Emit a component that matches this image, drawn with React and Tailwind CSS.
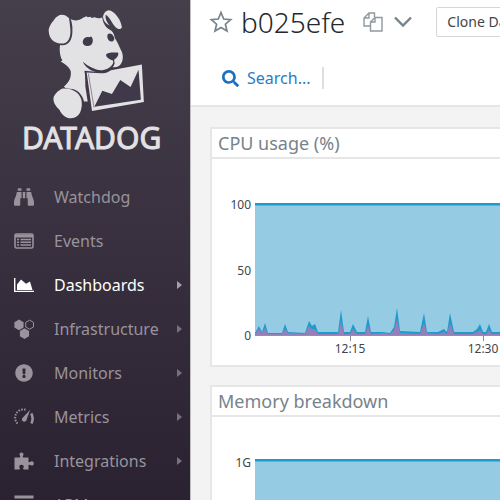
import React from "react";
import { FaBinoculars, FaSearch, FaExclamationCircle } from "react-icons/fa";

function Logo() {
  return (
    <svg viewBox="140 25 300 340" className="ml-[47px] h-[113px] w-[100px]" role="img" aria-label="Datadog mascot">
      <g fill="#e2e1e4">
        <path d="M206 56 C190 40 172 43 160 62 C152 72 143 84 145 98 C147 117 160 131 181 132 C203 133 211 116 210 91 C209 76 207 66 206 56Z" />
        <path d="M211 58 C224 66 236 62 248 54 L258 50 L262 53 L270 51 L274 55 L282 53 C293 56 300 57 306 53 C307 66 313 81 325 88 C340 97 341 103 344 116 C352 128 357 141 362 151 C369 162 370 181 363 191 C360 198 353 202 346 203 L334 203 L330 214 L304 220 L254 218 L255 262 L262 306 L251 306 C246 286 231 268 208 268 C199 268 194 266 190 262 C206 248 213 234 211 216 C209 206 198 196 181 186 L186 182 C179 173 176 150 179 136 C205 141 216 120 216 94 C217 80 214 68 211 58Z" />
        <path d="M308 50 C312 35 323 28 333 34 C349 43 362 62 365 83 C363 90 353 90 346 83 C333 69 330 53 316 45 C314 55 319 68 328 78 C316 73 309 64 308 50Z" />
        <path d="M184 268 C210 264 237 277 243 301 C247 321 242 346 225 354 C205 362 186 352 177 331 C164 320 156 304 160 291 C166 280 175 273 184 268Z" />
      </g>
      <g fill="#40394a">
        <path d="M247 127 C248 116 257 111 266 113 L273 111 C279 118 279 130 272 136 C262 143 247 139 247 127Z" />
        <path d="M322 105 C327 99 336 102 340 111 C345 120 340 126 333 126 C324 125 319 114 322 105Z" />
        <path d="M317 166 C320 159 336 158 352 159 C358 163 351 175 341 181 C332 185 318 175 317 166Z" />
        <path d="M247 187 C264 201 287 214 306 212 C323 210 335 201 339 189 L336 176 L341 178 L343 192 C338 209 323 219 306 220 C281 221 258 209 247 187Z" />
      </g>
      <path d="M252 214 L272 337 L434 309 L423 192 L332 206 L302 218Z" fill="#40394a" />
      <path d="M259 219 L302 221 C316 223 325 217 332 212 L425 195 L431 308 L275 335Z" fill="#e2e1e4" />
      <path d="M282 322 L306 274 L335 284 L360 242 L391 263 L415 211 L422 301Z" fill="#40394a" />
      <path d="M264 222 L281 324" stroke="#68616e" strokeWidth="2" fill="none" />
    </svg>
  );
}

const svgProps = { viewBox: "0 0 20 20", className: "size-5", "aria-hidden": true };

function EventsIcon() {
  return (
    <svg {...svgProps}>
      <rect x="1" y="3" width="18" height="14" rx="1.5" fill="none" stroke="currentColor" strokeWidth="1.6" />
      <path d="M1 3.5h18v3H1z" fill="currentColor" />
      <path d="M3 8.5h2M3 11.3h2M3 14h2M6.5 8.5H17M6.5 11.3H17M6.5 14H17" stroke="currentColor" strokeWidth="1.4" />
    </svg>
  );
}

function AreaIcon() {
  return (
    <svg {...svgProps}>
      <path d="M.7 3v13.4H20" fill="none" stroke="currentColor" strokeWidth="1.4" />
      <path d="M3 15V9.5L7 4.5l5 4.2L16 6.5 18.5 15Z" fill="currentColor" />
    </svg>
  );
}

function HexIcon() {
  return (
    <svg {...svgProps}>
      <path d="M5 .5l4.600 2.700v5.300L5 11.200.4 8.500V3.200Z" fill="currentColor" />
      <path d="M10.500 9.200l4.600 2.700v5.300l-4.600 2.700-4.600-2.700v-5.300Z" fill="currentColor" />
      <path d="M15.600 1.200l3.900 2.200v4.600l-3.900 2.200-3.900-2.200V3.400Z" fill="none" stroke="currentColor" strokeWidth="1" />
    </svg>
  );
}

function GaugeIcon() {
  return (
    <svg {...svgProps}>
      <path d="M3.500 16.500A8.300 8.300 0 0 1 12.500 3" fill="none" stroke="currentColor" strokeWidth="2" strokeDasharray="1.500 1.300" />
      <path d="M16.200 2.800l-3.500 9.400a2.400 2.400 0 1 1-3.800-1.800Z" fill="currentColor" />
      <path d="M17.200 6.500q2.800 4.500.2 10" fill="none" stroke="currentColor" strokeWidth="2.600" />
    </svg>
  );
}

function PuzzleIcon() {
  return (
    <svg {...svgProps}>
      <path
        d="M.5 6.500h5.300c1-.6.2-1.600-.2-2.400C5 2.300 6.300 1.400 7.500 1.400s2.500.9 1.900 2.700c-.4.800-1.200 1.800-.2 2.400h5.300v4c.6 1.200 1.600.4 2.400 0 1.700-.7 2.900.4 2.900 1.900s-1.200 2.600-2.900 1.900c-.8-.4-1.800-1-2.400 0v4.200H9.600c-1-.8-.2-1.500.1-2.400.5-1.400-.8-2.400-2.200-2.400s-2.700 1-2.200 2.400c.3.900 1.100 1.600.1 2.400H.5Z"
        fill="currentColor"
      />
    </svg>
  );
}

function StackIcon() {
  return (
    <svg {...svgProps}>
      <path d="M.5 2h19M.5 9h19M.5 16h19" stroke="currentColor" strokeWidth="3" />
    </svg>
  );
}

const navItems = [
  { label: "Watchdog", icon: <FaBinoculars className="size-5" /> },
  { label: "Events", icon: <EventsIcon /> },
  { label: "Dashboards", icon: <AreaIcon />, sub: true, active: true },
  { label: "Infrastructure", icon: <HexIcon />, sub: true },
  { label: "Monitors", icon: <FaExclamationCircle className="size-[18px]" />, sub: true },
  { label: "Metrics", icon: <GaugeIcon />, sub: true },
  { label: "Integrations", icon: <PuzzleIcon />, sub: true },
  { label: "APM", icon: <StackIcon />, sub: true },
];

function Sidebar() {
  return (
    <aside className="w-[190px] shrink-0 overflow-hidden bg-linear-to-b from-[#453e4b] to-[#2b2231]">
      <div className="pt-2">
        <Logo />
        <div className="ml-[22px] text-[30px] leading-[34px] text-[#e2e1e4] [-webkit-text-stroke:1px_#e2e1e4]">DATADOG</div>
      </div>
      <nav className="pt-5">
        <ul>
          {navItems.map((item) => (
            <li key={item.label}>
              <a
                href="#"
                className={`flex h-11 items-center pr-2 pl-[14px] text-base ${item.active ? "text-white" : "text-[#98939c]"}`}
              >
                <span className="mr-5 flex w-5 justify-center">{item.icon}</span>
                <span className="flex-1">{item.label}</span>
                {item.sub && (
                  <svg viewBox="0 0 5 8" className={`h-2 w-[5px] ${item.active ? "text-[#a5a1a9]" : "text-[#77717c]"}`} aria-hidden="true">
                    <path d="M0 0l5 4-5 4Z" fill="currentColor" />
                  </svg>
                )}
              </a>
            </li>
          ))}
        </ul>
      </nav>
    </aside>
  );
}

function Header() {
  return (
    <header className="h-[107px] border-b-2 border-[#e6e6e6] bg-white">
      <div className="flex h-11 items-center pl-[18px]">
        <button aria-label="Favorite">
          <svg viewBox="0 0 24 24" className="size-6" aria-hidden="true">
            <path d="M12 2.500l2.700 6.500 7 .6-5.300 4.600 1.600 6.800-6-3.600-6 3.600 1.600-6.800L2.300 9.600l7-.6Z" fill="none" stroke="#77838b" strokeWidth="1.700" />
          </svg>
        </button>
        <h1 className="ml-2 text-[28px] leading-9 font-light text-[#23292e]">b025efe</h1>
        <button aria-label="Copy" className="ml-[18px]">
          <svg viewBox="0 0 20 20" className="size-5" aria-hidden="true" fill="none" stroke="#8f999f" strokeWidth="1.400">
            <path d="M7.500 14H1V6l5-5h5.500v4M6 1v5H1" />
            <path d="M7.500 19V10l4.500-4.500h7V19ZM12 5.500V10H7.500" />
          </svg>
        </button>
        <button aria-label="More" className="ml-[11px]">
          <svg viewBox="0 0 18 12" className="h-3 w-[18px]" aria-hidden="true">
            <path d="M1 1.500l8 8 8-8" fill="none" stroke="#77838b" strokeWidth="2.400" />
          </svg>
        </button>
        <button className="ml-6 h-[30px] shrink-0 rounded-xs border border-[#d4d6d8] px-[10px] text-sm whitespace-nowrap text-[#3d464d]">
          Clone Dashboard
        </button>
      </div>
      <div className="flex h-[68px] items-center pl-[31px]">
        <button className="flex items-center gap-2 text-base text-[#2a7cc8]">
          <FaSearch className="size-[17px] text-[#1c70c0]" />
          Search...
        </button>
        <span className="ml-[11px] h-[22px] w-[2px] bg-[#dcdee0]" />
      </div>
    </header>
  );
}

// [x, total height, user height] in pixels above the axis
const samples = [
  [0, 3, 2], [4, 10, 7], [7, 4, 3], [10, 13, 8], [13, 3, 2], [27, 3, 2], [30, 12, 7], [33, 4, 3],
  [50, 3, 2], [54, 15, 10], [57, 10, 7], [60, 12, 7], [63, 4, 2], [83, 4, 2], [86, 26, 15],
  [89, 4, 2], [95, 4, 2], [98, 12, 7], [102, 4, 2], [110, 4, 2], [113, 20, 11], [116, 4, 2],
  [128, 4, 3], [135, 3, 2], [139, 9, 6], [142, 28, 17], [145, 5, 3], [165, 4, 2], [169, 23, 13],
  [172, 4, 3], [183, 4, 2], [189, 7, 4], [192, 4, 2], [195, 23, 13], [199, 4, 2], [218, 4, 2],
  [222, 7, 4], [225, 12, 6], [228, 4, 2], [231, 4, 2], [234, 12, 6], [237, 4, 2], [360, 4, 2],
];
const areaPoints = (col) => `0,0 ${samples.map((s) => `${s[0]},${-s[col]}`).join(" ")} 360,0`;

function CpuChart() {
  return (
    <svg className="block h-[206px] w-full" role="img" aria-label="CPU usage over time">
      <g transform="translate(43 177)">
        <rect y="-132" width="100%" height="132" fill="#95cbe3" />
        <rect y="-133" width="100%" height="2.500" fill="#1e9bcd" />
        <polygon points={areaPoints(1)} fill="#1e9bcd" />
        <polygon points={areaPoints(2)} fill="#957fb8" />
        <path d="M0 -.5H600" stroke="#8794ae" />
        <path d="M95.500 0v5M228.500 0v5" stroke="#858d93" />
        <g fontSize="12" fill="#3d464d">
          <g textAnchor="end">
            <text x="-4" y="-127">100</text>
            <text x="-4" y="-61">50</text>
            <text x="-4" y="4">0</text>
          </g>
          <g textAnchor="middle">
            <text x="95" y="17">12:15</text>
            <text x="228" y="17">12:30</text>
          </g>
        </g>
      </g>
    </svg>
  );
}

function MemoryChart() {
  return (
    <svg className="block h-[206px] w-full" role="img" aria-label="Memory breakdown over time">
      <g transform="translate(43 177)">
        <rect y="-134" width="100%" height="134" fill="#95cbe3" />
        <rect y="-135" width="100%" height="2.500" fill="#1e9bcd" />
        <text x="-4" y="-127" textAnchor="end" fontSize="12" fill="#3d464d">1G</text>
      </g>
    </svg>
  );
}

function Card({ title, children }) {
  return (
    <section className="border-2 border-[#e6e6e6] bg-white">
      <h2 className="h-[30px] border-b-2 border-[#e6e6e6] pl-[6px] text-lg leading-7 text-[#77838b]">{title}</h2>
      {children}
    </section>
  );
}

export default function App() {
  return (
    <div className="flex h-screen overflow-hidden bg-[#f3f3f3] font-['Noto_Sans',sans-serif]">
      <Sidebar />
      <main className="min-w-0 flex-1 overflow-hidden border-l border-[#bfbfc3]">
        <div className="min-w-[560px]">
          <Header />
          <div className="flex flex-col gap-[18px] py-5 pr-5 pl-[19px]">
            <Card title="CPU usage (%)"><CpuChart /></Card>
            <Card title="Memory breakdown"><MemoryChart /></Card>
          </div>
        </div>
      </main>
    </div>
  );
}
